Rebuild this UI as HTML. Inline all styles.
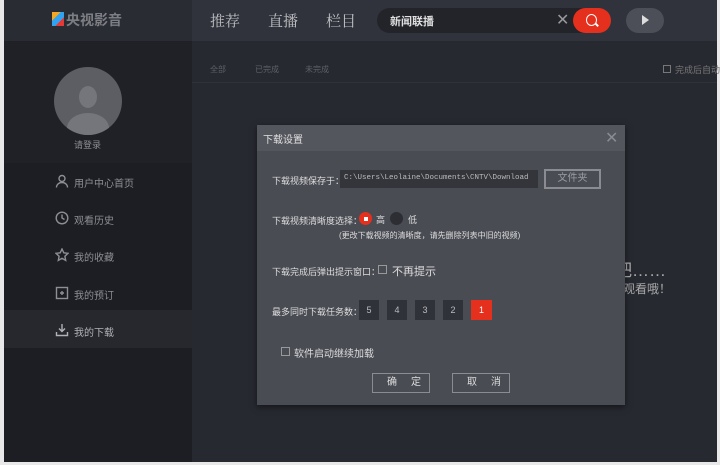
<!DOCTYPE html>
<html><head><meta charset="utf-8"><style>
*{margin:0;padding:0;box-sizing:border-box}
body{width:720px;height:465px;background:#e8e8e8;position:relative;overflow:hidden;font-family:"Liberation Sans","Noto Sans CJK SC",sans-serif}
.a{position:absolute;white-space:nowrap}
</style></head><body>
<div class="a" style="left:4px;top:0;width:713px;height:462px;background:#272931"></div>
<!-- header -->
<div class="a" style="left:4px;top:0;width:713px;height:41px;background:#30333c"></div>
<div class="a" style="left:4px;top:0;width:188px;height:41px;background:#2a2c33"></div>
<div class="a" style="left:52px;top:12px;width:12px;height:14px;background:linear-gradient(135deg,#f5a623 0 33%,#2ea3f2 33% 66%,#e53935 66%)"></div>
<div class="a" style="left:66px;top:10px;font-size:14px;color:#7c7e84;font-weight:bold">央视影音</div>
<div class="a" style="left:210px;top:10px;font-size:15px;color:#c0c1c4;font-family:'Noto Serif CJK SC',serif">推荐</div>
<div class="a" style="left:268px;top:10px;font-size:15px;color:#c0c1c4;font-family:'Noto Serif CJK SC',serif">直播</div>
<div class="a" style="left:326px;top:10px;font-size:15px;color:#c0c1c4;font-family:'Noto Serif CJK SC',serif">栏目</div>
<div class="a" style="left:377px;top:8px;width:225px;height:25px;border-radius:13px;background:#22242a"></div>
<div class="a" style="left:390px;top:13px;font-size:11px;color:#e0e0e0;font-weight:bold">新闻联播</div>
<div class="a" style="left:556px;top:10px;font-size:16px;color:#999">✕</div>
<div class="a" style="left:573px;top:8px;width:38px;height:25px;border-radius:13px;background:#e4301d"></div>
<div class="a" style="left:586px;top:14px;width:11px;height:12px;border:1.5px solid #fff;border-radius:50%"></div>
<div class="a" style="left:595px;top:24px;width:4px;height:1.5px;background:#fff;transform:rotate(45deg)"></div>
<div class="a" style="left:626px;top:8px;width:38px;height:25px;border-radius:13px;background:#4c4f57"></div>
<div class="a" style="left:642px;top:15px;width:0;height:0;border-left:7px solid #ddd;border-top:5px solid transparent;border-bottom:5px solid transparent"></div>
<!-- sidebar -->
<div class="a" style="left:4px;top:41px;width:188px;height:421px;background:#1d1e23"></div>
<div class="a" style="left:4px;top:41px;width:188px;height:122px;background:#202127"></div>
<div class="a" style="left:54px;top:67px;width:68px;height:68px;border-radius:50%;background:#5c5e64;overflow:hidden">
<div class="a" style="left:25px;top:19px;width:18px;height:22px;border-radius:50%;background:#74767c"></div>
<div class="a" style="left:13px;top:46px;width:42px;height:30px;border-radius:50%;background:#74767c"></div></div>
<div class="a" style="left:74px;top:138px;font-size:9px;color:#8d8f94">请登录</div>
<div class="a" style="left:4px;top:310px;width:188px;height:38px;background:#27282e"></div>
<svg class="a" style="left:55px;top:174px" width="14" height="14" viewBox="0 0 14 14" fill="none" stroke="#8d8f94" stroke-width="1.4"><circle cx="7" cy="4.5" r="3"/><path d="M1.5 13.5c0-3 2.5-5 5.5-5s5.5 2 5.5 5"/></svg>
<svg class="a" style="left:55px;top:211px" width="14" height="14" viewBox="0 0 14 14" fill="none" stroke="#8d8f94" stroke-width="1.4"><circle cx="7" cy="7" r="5.8"/><path d="M7 3.5V7l2.5 1.5"/></svg>
<svg class="a" style="left:55px;top:248px" width="14" height="14" viewBox="0 0 14 14" fill="none" stroke="#8d8f94" stroke-width="1.4"><path d="M7 1l1.8 3.8 4.2.5-3.1 2.9.8 4.2L7 10.3l-3.7 2.1.8-4.2L1 5.3l4.2-.5z"/></svg>
<svg class="a" style="left:55px;top:286px" width="14" height="14" viewBox="0 0 14 14" fill="none" stroke="#8d8f94" stroke-width="1.4"><rect x="1.5" y="1.5" width="11" height="11"/><path d="M5 7h4M7 5v4"/></svg>
<svg class="a" style="left:55px;top:323px" width="14" height="14" viewBox="0 0 14 14" fill="none" stroke="#b0b2b6" stroke-width="1.4"><path d="M7 1v7M4 5.5L7 8.5l3-3M1.5 9v3.5h11V9"/></svg>
<div class="a" style="left:74px;top:175px;font-size:10px;color:#8d8f94">用户中心首页</div>
<div class="a" style="left:74px;top:212px;font-size:10px;color:#8d8f94">观看历史</div>
<div class="a" style="left:74px;top:249px;font-size:10px;color:#8d8f94">我的收藏</div>
<div class="a" style="left:74px;top:287px;font-size:10px;color:#8d8f94">我的预订</div>
<div class="a" style="left:74px;top:324px;font-size:10px;color:#b0b2b6">我的下载</div>
<!-- main -->
<div class="a" style="left:210px;top:64px;font-size:8px;color:#5d6068">全部</div>
<div class="a" style="left:255px;top:64px;font-size:8px;color:#5d6068">已完成</div>
<div class="a" style="left:305px;top:64px;font-size:8px;color:#5d6068">未完成</div>
<div class="a" style="left:192px;top:82px;width:525px;height:1px;background:#2f323a"></div>
<div class="a" style="left:663px;top:65px;width:8px;height:8px;border:1px solid #777"></div>
<div class="a" style="left:675px;top:63px;font-size:9px;color:#777">完成后自动</div>
<div class="a" style="left:615px;top:256px;font-size:17px;color:#aaa">吧……</div>
<div class="a" style="left:623px;top:280px;font-size:12px;color:#aaa">观看哦！</div>
<!-- dialog -->
<div class="a" style="left:257px;top:125px;width:368px;height:280px;background:#4a4c54;box-shadow:0 2px 6px rgba(0,0,0,.5)"></div>
<div class="a" style="left:257px;top:125px;width:368px;height:26px;background:#54565e"></div>
<div class="a" style="left:263px;top:131px;font-size:10px;color:#e0e0e0">下载设置</div>
<div class="a" style="left:605px;top:128px;font-size:16px;color:#8a8c92">✕</div>
<div class="a" style="left:272px;top:174px;font-size:9px;color:#ddd">下载视频保存于：</div>
<div class="a" style="left:340px;top:170px;width:198px;height:18px;background:#33353b"></div>
<div class="a" style="left:344px;top:174px;font-size:7.5px;color:#bbb;font-family:'Liberation Mono',monospace">C:\Users\Leolaine\Documents\CNTV\Download</div>
<div class="a" style="left:544px;top:169px;width:57px;height:20px;border:2px solid #8a8c92;font-size:10px;color:#9a9ca2;text-align:center;line-height:16px">文件夹</div>
<div class="a" style="left:272px;top:214px;font-size:9px;color:#ddd">下载视频清晰度选择：</div>
<div class="a" style="left:359px;top:212px;width:13px;height:13px;border-radius:50%;background:#e4301d"></div>
<div class="a" style="left:364px;top:217px;width:4px;height:4px;background:#fff"></div>
<div class="a" style="left:376px;top:213px;font-size:9px;color:#ddd">高</div>
<div class="a" style="left:390px;top:212px;width:13px;height:13px;border-radius:50%;background:#2c2e34"></div>
<div class="a" style="left:408px;top:213px;font-size:9px;color:#ddd">低</div>
<div class="a" style="left:339px;top:230px;font-size:8px;color:#ddd">(更改下载视频的清晰度，请先删除列表中旧的视频)</div>
<div class="a" style="left:272px;top:265px;font-size:9px;color:#ddd">下载完成后弹出提示窗口：</div>
<div class="a" style="left:378px;top:265px;width:9px;height:9px;border:1px solid #999"></div>
<div class="a" style="left:392px;top:263px;font-size:11px;color:#ddd">不再提示</div>
<div class="a" style="left:272px;top:305px;font-size:9px;color:#ddd">最多同时下载任务数：</div>
<div class="a" style="left:359px;top:300px;width:20px;height:20px;background:#30323a;color:#bbb;font-size:9px;text-align:center;line-height:20px">5</div>
<div class="a" style="left:387px;top:300px;width:20px;height:20px;background:#30323a;color:#bbb;font-size:9px;text-align:center;line-height:20px">4</div>
<div class="a" style="left:415px;top:300px;width:20px;height:20px;background:#30323a;color:#bbb;font-size:9px;text-align:center;line-height:20px">3</div>
<div class="a" style="left:443px;top:300px;width:20px;height:20px;background:#30323a;color:#bbb;font-size:9px;text-align:center;line-height:20px">2</div>
<div class="a" style="left:471px;top:300px;width:21px;height:20px;background:#e4301d;color:#fff;font-size:9px;text-align:center;line-height:20px">1</div>
<div class="a" style="left:281px;top:347px;width:9px;height:9px;border:1px solid #999"></div>
<div class="a" style="left:294px;top:345px;font-size:10px;color:#ddd">软件启动继续加载</div>
<div class="a" style="left:372px;top:373px;width:58px;height:20px;border:1.5px solid #8a8c92;font-size:10px;color:#ddd;text-align:center;line-height:17px;letter-spacing:14px;padding-left:14px">确定</div>
<div class="a" style="left:452px;top:373px;width:58px;height:20px;border:1.5px solid #8a8c92;font-size:10px;color:#ddd;text-align:center;line-height:17px;letter-spacing:14px;padding-left:14px">取消</div>
</body></html>
